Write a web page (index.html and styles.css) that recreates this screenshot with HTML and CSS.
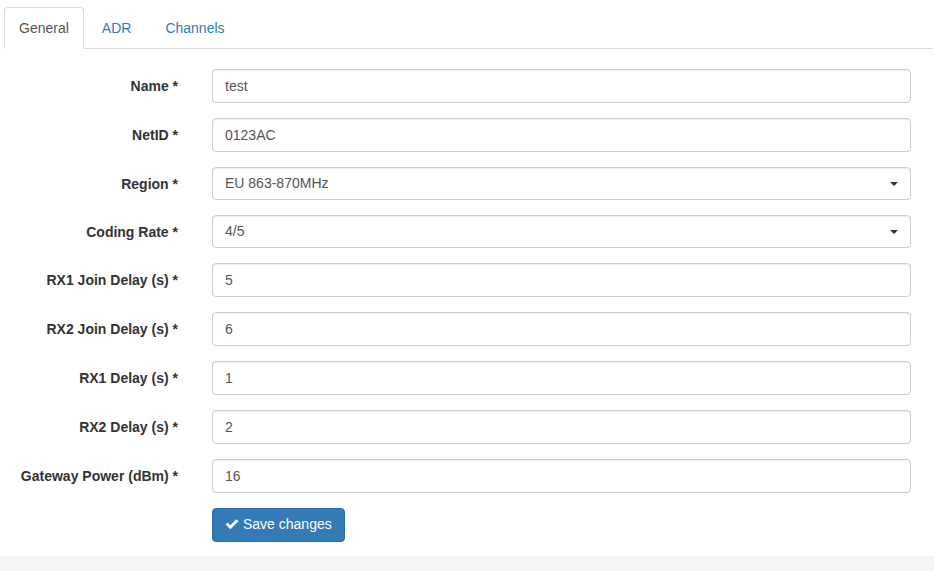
FILE: index.html
```html
<!DOCTYPE html>
<html>
<head>
<meta charset="utf-8">
<link rel="stylesheet" href="styles.css">
</head>
<body>
<div class="page">
  <ul class="tabs">
    <li class="tab active"><a>General</a></li>
    <li class="tab"><a>ADR</a></li>
    <li class="tab"><a>Channels</a></li>
  </ul>
  <form class="form">
    <div class="row"><label>Name *</label><div class="field"><div class="input">test</div></div></div>
    <div class="row"><label>NetID *</label><div class="field"><div class="input">0123AC</div></div></div>
    <div class="row"><label>Region *</label><div class="field"><div class="input select">EU 863-870MHz<span class="caret"></span></div></div></div>
    <div class="row"><label>Coding Rate *</label><div class="field"><div class="input select">4/5<span class="caret"></span></div></div></div>
    <div class="row"><label>RX1 Join Delay (s) *</label><div class="field"><div class="input">5</div></div></div>
    <div class="row"><label>RX2 Join Delay (s) *</label><div class="field"><div class="input">6</div></div></div>
    <div class="row"><label>RX1 Delay (s) *</label><div class="field"><div class="input">1</div></div></div>
    <div class="row"><label>RX2 Delay (s) *</label><div class="field"><div class="input">2</div></div></div>
    <div class="row"><label>Gateway Power (dBm) *</label><div class="field"><div class="input">16</div></div></div>
    <div class="row last"><label></label><div class="field"><button type="button" class="btn"><svg class="ok" viewBox="0 0 14 12" width="14" height="12"><path d="M0.6 6.4 L2.6 4.4 L5.4 7.2 L11.4 1.2 L13.4 3.2 L5.4 11.2 Z" fill="#fff"/></svg>Save changes</button></div></div>
  </form>
</div>
</body>
</html>
```
FILE: styles.css
```css
html, body { margin: 0; padding: 0; }
body {
  background: #f5f5f5;
  font-family: "Liberation Sans", Arial, sans-serif;
  font-size: 14px;
  line-height: 20px;
  color: #333;
  width: 934px;
  height: 571px;
  overflow: hidden;
}
.page {
  background: #fff;
  padding-top: 7px;
}
.tabs {
  list-style: none;
  margin: 0 1px 0 4px;
  padding: 0;
  display: flex;
  border-bottom: 1px solid #ddd;
  height: 41px;
}
.tab { margin-right: 2px; margin-bottom: -1px; }
.tab a {
  display: block;
  padding: 10px 15px 10px;
  border: 1px solid transparent;
  border-radius: 4px 4px 0 0;
  color: #337ab7;
  line-height: 20px;
}
.tab.active a {
  padding-left: 14px;
  padding-right: 14px;
  color: #555;
  background: #fff;
  border-color: #ddd #ddd transparent;
}
.form {
  padding-top: 20px;
  padding-bottom: 0;
  overflow: hidden;
}
.row {
  display: flex;
  margin-bottom: 15px;
}
.row.last { margin-bottom: 14px; }
.row label {
  width: 178px;
  text-align: right;
  font-weight: bold;
  padding-top: 7px;
  box-sizing: border-box;
  flex: none;
}
.field {
  margin-left: 34px;
  width: 699px;
  flex: none;
}
.input {
  height: 34px;
  box-sizing: border-box;
  border: 1px solid #ccc;
  border-radius: 4px;
  padding: 6px 12px;
  color: #555;
  background: #fff;
  box-shadow: inset 0 1px 1px rgba(0,0,0,.075);
  position: relative;
}
.input.select {
  height: 33px;
  padding-top: 5px;
}
.caret {
  position: absolute;
  right: 12px;
  top: 14px;
  width: 0;
  height: 0;
  border-top: 4px solid #333;
  border-left: 4px solid transparent;
  border-right: 4px solid transparent;
}
.btn {
  font-family: "Liberation Sans", Arial, sans-serif;
  font-size: 14px;
  line-height: 20px;
  color: #fff;
  background: #337ab7;
  border: 1px solid #2e6da4;
  border-radius: 4px;
  padding: 5px 12px 7px;
  height: 34px;
  display: flex;
  align-items: center;
  white-space: nowrap;
  box-sizing: border-box;
  cursor: pointer;
}
.ok { margin-right: 4px; margin-top: -1px; }
```
